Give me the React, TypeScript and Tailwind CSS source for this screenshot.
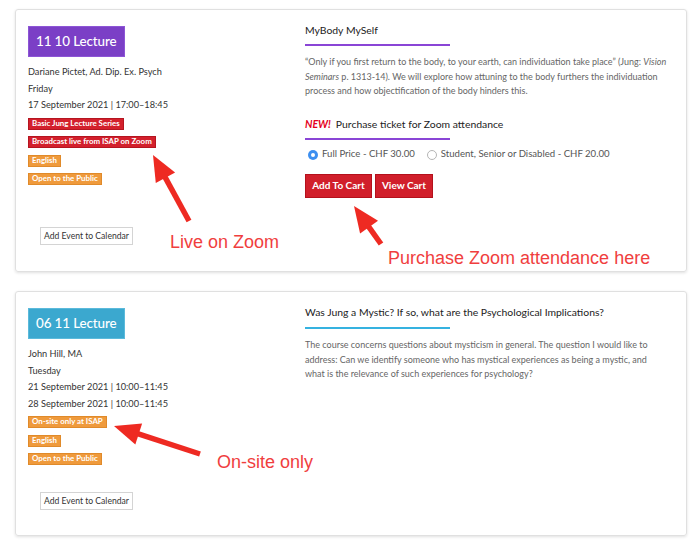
import React from "react";

type Tag = { label: string; color: "red" | "orange" };

const tagColor = {
    red: "bg-[#d3202c] border-[#b51520]",
    orange: "bg-[#ef9a3c] border-[#e08a2a]",
};

const Arrow = ({ tip, tail }: { tip: [number, number]; tail: [number, number] }) => {
    const dx = tail[0] - tip[0];
    const dy = tail[1] - tip[1];
    const len = Math.hypot(dx, dy);
    const ux = dx / len;
    const uy = dy / len;
    const bx = tip[0] + ux * 26;
    const by = tip[1] + uy * 26;
    const nx = -uy * 11;
    const ny = ux * 11;
    return (
        <g>
            <line x1={bx - ux * 2} y1={by - uy * 2} x2={tail[0]} y2={tail[1]} stroke="#ee2a22" strokeWidth={5.5} />
            <polygon
                points={`${tip[0]},${tip[1]} ${bx + nx},${by + ny} ${bx - nx},${by - ny}`}
                fill="#ee2a22"
            />
        </g>
    );
};

const Note = ({ text, className }: { text: string; className: string }) => (
    <div
        className={`absolute whitespace-nowrap text-[18px] leading-[20px] text-[#f03e3e] ${className}`}
        style={{ fontFamily: '"Liberation Sans", Arial, sans-serif' }}>
        {text}
    </div>
);

const LeftColumn = ({
    badge,
    badgeColor,
    lines,
    tags,
    buttonGap,
}: {
    badge: string;
    badgeColor: string;
    lines: string[];
    tags: Tag[];
    buttonGap: string;
}) => (
    <div className="w-[277px] shrink-0 flex flex-col items-start">
        <div
            className={`h-[31px] px-[7px] flex items-center text-white text-[13.4px] font-medium tracking-[-0.1px] border ${badgeColor}`}>
            {badge}
        </div>
        <div className="mt-[7px] text-[9.2px] leading-[16.5px] text-[#333]">
            {lines.map((l) => (
                <div key={l}>{l}</div>
            ))}
        </div>
        <div className="mt-[4px] flex flex-col items-start gap-[6.6px]">
            {tags.map((t) => (
                <span
                    key={t.label}
                    className={`h-[12px] px-[3px] flex items-center text-[7.9px] font-bold text-white border ${tagColor[t.color]}`}>
                    {t.label}
                </span>
            ))}
        </div>
        <button
            className={`ml-[12px] ${buttonGap} h-[18px] w-[93px] border border-[#d4d4d4] bg-white text-[8.6px] text-[#333] flex items-center justify-center`}>
            Add Event to Calendar
        </button>
    </div>
);

const Radio = ({ checked, label }: { checked?: boolean; label: string }) => (
    <label className="flex items-center gap-[4px] text-[9.6px] text-[#555]">
        {checked ? (
            <span className="w-[10px] h-[10px] rounded-full bg-[#3d8ff0] flex items-center justify-center">
                <span className="w-[4px] h-[4px] rounded-full bg-white" />
            </span>
        ) : (
            <span className="w-[10px] h-[10px] rounded-full border border-[#b5b5b5] bg-white" />
        )}
        {label}
    </label>
);

const App = () => {
    return (
        <div className="w-[700px] h-[547px] bg-white pt-[9px]" style={{ fontFamily: "Lato, sans-serif" }}>
            {/* first event */}
            <div className="relative ml-[15px] w-[672px] h-[263px] border border-[#e0e0e0] rounded-[3px] shadow-[0_1px_3px_rgba(0,0,0,0.12)] flex pl-[12px] pt-[16px]">
                <LeftColumn
                    badge="11 10 Lecture"
                    badgeColor="bg-[#7b3fc6] border-[#8d55d6]"
                    lines={["Dariane Pictet, Ad. Dip. Ex. Psych", "Friday", "17 September 2021 | 17:00–18:45"]}
                    tags={[
                        { label: "Basic Jung Lecture Series", color: "red" },
                        { label: "Broadcast live from ISAP on Zoom", color: "red" },
                        { label: "English", color: "orange" },
                        { label: "Open to the Public", color: "orange" },
                    ]}
                    buttonGap="mt-[42px]"
                />
                <div className="flex-1 pr-[10px] -mt-[3px]">
                    <div className="text-[10.4px] leading-[14px] text-[#222]">MyBody MySelf</div>
                    <div className="mt-[7px] w-[145px] h-[2px] bg-[#8a45d6]" />
                    <p className="mt-[9px] text-[9px] leading-[14.5px] text-[#666]">
                        “Only if you first return to the body, to your earth, can individuation take place” (Jung:{" "}
                        <i>Vision Seminars</i> p. 1313-14). We will explore how attuning to the body furthers the
                        individuation process and how objectification of the body hinders this.
                    </p>
                    <div className="mt-[18px] text-[10.4px] leading-[14px] text-[#222] flex gap-[5px]">
                        <span className="font-bold italic text-[#e5001b]">NEW!</span>
                        <span>Purchase ticket for Zoom attendance</span>
                    </div>
                    <div className="mt-[7px] w-[145px] h-[2px] bg-[#8a45d6]" />
                    <div className="mt-[8px] h-[14px] flex items-center gap-[12px] pl-[3px]">
                        <Radio checked label="Full Price - CHF 30.00" />
                        <Radio label="Student, Senior or Disabled - CHF 20.00" />
                    </div>
                    <div className="mt-[12px] flex gap-[3px]">
                        <button className="h-[24px] w-[67px] bg-[#d11f2b] border border-[#b4111c] text-white text-[10px] font-bold">
                            Add To Cart
                        </button>
                        <button className="h-[24px] w-[58px] bg-[#d11f2b] border border-[#b4111c] text-white text-[10px] font-bold">
                            View Cart
                        </button>
                    </div>
                </div>
                <svg className="absolute left-0 top-0 pointer-events-none" width="672" height="263">
                    <Arrow tip={[137, 145]} tail={[173, 211]} />
                    <Arrow tip={[338, 196]} tail={[365, 234]} />
                </svg>
                <Note text="Live on Zoom" className="left-[154px] top-[222px]" />
                <Note text="Purchase Zoom attendance here" className="left-[372px] top-[238px]" />
            </div>

            {/* second event */}
            <div className="relative ml-[15px] mt-[19px] w-[672px] h-[245px] border border-[#e0e0e0] rounded-[3px] shadow-[0_1px_3px_rgba(0,0,0,0.12)] flex pl-[12px] pt-[16px]">
                <LeftColumn
                    badge="06 11 Lecture"
                    badgeColor="bg-[#3ba8cf] border-[#5bbadb]"
                    lines={[
                        "John Hill, MA",
                        "Tuesday",
                        "21 September 2021 | 10:00–11:45",
                        "28 September 2021 | 10:00–11:45",
                    ]}
                    tags={[
                        { label: "On-site only at ISAP", color: "orange" },
                        { label: "English", color: "orange" },
                        { label: "Open to the Public", color: "orange" },
                    ]}
                    buttonGap="mt-[27px]"
                />
                <div className="flex-1 pr-[22px] -mt-[3px]">
                    <div className="text-[10.4px] leading-[14px] text-[#222]">
                        Was Jung a Mystic? If so, what are the Psychological Implications?
                    </div>
                    <div className="mt-[8px] w-[145px] h-[2px] bg-[#35b2e0]" />
                    <p className="mt-[9px] text-[9px] leading-[14.5px] text-[#666]">
                        The course concerns questions about mysticism in general. The question I would like to
                        address: Can we identify someone who has mystical experiences as being a mystic, and what is
                        the relevance of such experiences for psychology?
                    </p>
                </div>
                <svg className="absolute left-0 top-0 pointer-events-none" width="672" height="245">
                    <Arrow tip={[98, 134]} tail={[184, 162]} />
                </svg>
                <Note text="On-site only" className="left-[201px] top-[160px]" />
            </div>
        </div>
    );
};

export default App;
